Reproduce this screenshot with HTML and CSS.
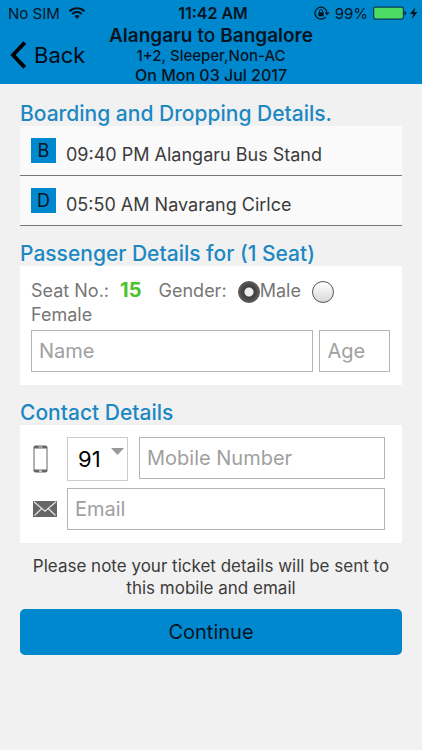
FILE: index.html
```html
<!DOCTYPE html>
<html lang="en">
<head>
<meta charset="utf-8">
<meta name="viewport" content="width=device-width, initial-scale=1">
<title>Passenger Details</title>
<link rel="stylesheet" href="styles.css">
</head>
<body>
<header class="top">
  <div class="status">
    <div class="status-left">
      <span>No SIM</span>
      <svg class="wifi" viewBox="0 0 18 12" width="18" height="12" aria-hidden="true">
        <path d="M1.5 4.3a10.8 10.8 0 0 1 15 0M4.2 7a7 7 0 0 1 9.6 0" fill="none" stroke="#06141f" stroke-width="2"/>
        <path d="M6.4 9.1a3.8 3.8 0 0 1 5.2 0L9 12z" fill="#06141f"/>
      </svg>
    </div>
    <span class="clock">11:42 AM</span>
    <div class="status-right">
      <svg viewBox="0 0 16 14" width="16" height="14" aria-hidden="true">
        <path d="M11.8 10.8A6 6 0 1 1 13 7" fill="none" stroke="#06141f" stroke-width="1.2"/>
        <path d="M10.6 6.6h5L13.1 9.6z" fill="#06141f"/>
        <rect x="4.4" y="6.2" width="5.2" height="4" rx=".5" fill="#06141f"/>
        <path d="M5.4 6.4V5.2a1.6 1.6 0 0 1 3.2 0v1.2" fill="none" stroke="#06141f"/>
      </svg>
      <span>99%</span>
      <svg viewBox="0 0 45 14" width="45" height="14" aria-hidden="true">
        <rect x=".6" y="1.1" width="29.8" height="12" rx="2" fill="#4cd964" stroke="#073c55" stroke-width="1.2"/>
        <path d="M31.6 5c2 .4 2 3.8 0 4.2z" fill="#06141f"/>
        <path d="M42.4 1.2L37 8h3.2l-1.4 5.2 5.7-7.2h-3.3z" fill="#06141f"/>
      </svg>
    </div>
  </div>
  <div class="nav">
    <a class="back" href="#">
      <svg viewBox="0 0 17 28" width="17" height="28" aria-hidden="true">
        <path d="M14.8 1.6L3 14l11.8 12.4" fill="none" stroke="#000" stroke-width="3.8"/>
      </svg>
      <span>Back</span>
    </a>
    <div class="trip">
      <h1><b>Alangaru</b> to <b>Bangalore</b></h1>
      <p class="bus">1+2, Sleeper,Non-AC</p>
      <p class="date">On Mon 03 Jul 2017</p>
    </div>
  </div>
</header>

<main class="content">
  <section>
    <h2>Boarding and Dropping Details.</h2>
    <ul class="stops">
      <li><span class="tag">B</span><span class="stop">09:40 PM Alangaru Bus Stand</span></li>
      <li><span class="tag">D</span><span class="stop">05:50 AM Navarang Cirlce</span></li>
    </ul>
  </section>

  <form>
    <section>
      <h2>Passenger Details for (1 Seat)</h2>
      <div class="panel">
        <div class="seat">
          <span>Seat No.:</span> <b class="number">15</b>
          <span class="gender">Gender:</span>
          <label><input type="radio" name="gender" checked>Male</label>
          <label><input type="radio" name="gender"> Female</label>
        </div>
        <div class="person">
          <input class="field" type="text" placeholder="Name" aria-label="Name">
          <input class="field" type="text" placeholder="Age" aria-label="Age">
        </div>
      </div>
    </section>

    <section>
      <h2>Contact Details</h2>
      <div class="panel contact">
        <label class="icon" for="mobile" aria-label="Mobile">
          <svg viewBox="0 0 16 28" width="16" height="28" aria-hidden="true">
            <rect x=".5" y=".5" width="14" height="27" rx="2" fill="#666"/>
            <rect x="1.5" y="3.5" width="12" height="21" fill="#fff"/>
            <path d="M5.5 2h4" stroke="#ddd"/>
            <rect x="6" y="25.3" width="3" height="1.4" rx=".5" fill="#ddd"/>
          </svg>
        </label>
        <div class="phone">
          <div class="code">
            <select aria-label="Country code"><option>91</option></select>
            <svg class="arrow" viewBox="0 0 13 7" width="13" height="7" aria-hidden="true"><path d="M0 0h13L6.5 7z" fill="#999"/></svg>
          </div>
          <input class="field" id="mobile" type="tel" placeholder="Mobile Number">
        </div>
        <label class="icon" for="email" aria-label="Email">
          <svg viewBox="0 0 24 16" width="24" height="16" aria-hidden="true">
            <path d="M0 0h24v16H0z" fill="#666"/>
            <path d="M1 .8l11 9.4L23 .8M1.5 14.5l7-6.7M22.5 14.5l-7-6.7" fill="none" stroke="#e4e4e4" stroke-width="1.2"/>
          </svg>
        </label>
        <input class="field" id="email" type="email" placeholder="Email">
      </div>
    </section>

    <p class="note">Please note your ticket details will be sent to this mobile and email</p>
    <button class="continue" type="button">Continue</button>
  </form>
</main>
</body>
</html>
```
FILE: styles.css
```css
* {
  box-sizing: border-box;
}

body {
  margin: 0;
  min-height: 100vh;
  background: #f1f1f1;
  color: #3c3c3c;
  font-family: Inter, "Liberation Sans", sans-serif;
  font-size: 18px;
}

h1,
h2,
p,
ul {
  margin: 0;
  padding: 0;
  font-weight: 400;
}

input,
select,
button {
  margin: 0;
  font: inherit;
}

.top {
  background: #0088cf;
  color: #06141f;
}

.status {
  display: grid;
  grid-template-columns: 1fr auto 1fr;
  align-items: center;
  height: 26px;
  padding: 0 4px 0 8px;
  font-size: 15px;
}

.status-left,
.status-right {
  display: flex;
  align-items: center;
  gap: 8px;
}

.status-right {
  justify-content: flex-end;
  gap: 5px;
}

.clock {
  font-size: 16px;
  font-weight: 600;
}

.nav {
  display: grid;
  grid-template-columns: 1fr auto 1fr;
  align-items: center;
  height: 58px;
  padding: 0 10px;
}

.back {
  display: flex;
  align-items: center;
  gap: 7px;
  color: #000b14;
  font-size: 22px;
  text-decoration: none;
}

.trip {
  text-align: center;
}

.trip h1 {
  font-size: 19px;
  font-weight: 500;
  line-height: 20px;
}

.trip b {
  font-weight: 600;
}

.bus {
  font-size: 15px;
  font-weight: 500;
  line-height: 20px;
}

.date {
  font-size: 16px;
  font-weight: 500;
  line-height: 18px;
}

.content {
  padding: 18px 20px;
}

section {
  margin-bottom: 16px;
}

h2 {
  color: #1b88c3;
  font-size: 21px;
  font-weight: 500;
  line-height: 24px;
}

.stops {
  background: #fafafa;
  list-style: none;
}

.stops li {
  display: flex;
  align-items: center;
  gap: 10px;
  height: 50px;
  padding: 0 11px;
  border-bottom: 1px solid #777;
}

.tag {
  width: 25px;
  height: 25px;
  background: #0088cf;
  color: #06141f;
  line-height: 25px;
  text-align: center;
}

.stop {
  padding-top: 8px;
}

.panel {
  padding: 13px 12px 13px 11px;
  background: #fff;
}

.seat {
  color: #777;
  line-height: 24px;
}

.number {
  margin: 0 12px 0 6px;
  color: #4cc22b;
  font-size: 20px;
  line-height: 20px;
}

.seat input {
  appearance: none;
  width: 22px;
  height: 22px;
  margin-left: 6px;
  border: 1px solid #555;
  border-radius: 50%;
  background: linear-gradient(#fff, #d8d8d8);
  vertical-align: middle;
}

.seat input:checked {
  background: radial-gradient(circle, #eee 0 4px, #444 5px 7px, #666 11px);
}

.person {
  display: grid;
  grid-template-columns: 4fr 1fr;
  gap: 6px;
  margin-top: 3px;
}

.field {
  width: 100%;
  min-width: 0;
  height: 42px;
  padding: 0 7px;
  border: 1px solid #b5b5b5;
  border-radius: 0;
  background: #fff;
  font-size: 20px;
}

.field::placeholder {
  color: #a0a0a0;
}

.contact {
  display: grid;
  grid-template-columns: 26px 1fr;
  gap: 7px 10px;
  align-items: center;
  padding: 12px 17px 13px 11px;
}

.icon {
  padding-left: 2px;
}

.icon svg {
  display: block;
}

.phone {
  display: grid;
  grid-template-columns: 61px 1fr;
  gap: 11px;
}

.code {
  position: relative;
}

.code select {
  appearance: none;
  width: 100%;
  height: 44px;
  padding: 0 10px;
  border: 1px solid #ccc;
  border-radius: 0;
  background: #fff;
  color: #000;
  font-size: 22px;
}

.arrow {
  position: absolute;
  top: 11px;
  right: 4px;
  pointer-events: none;
}

.note {
  margin-top: -4px;
  font-size: 17px;
  line-height: 22px;
  text-align: center;
}

.continue {
  width: 100%;
  height: 46px;
  margin-top: 10px;
  border: 0;
  border-radius: 5px;
  background: #0088cf;
  color: #06141f;
  font-size: 20px;
}
```
